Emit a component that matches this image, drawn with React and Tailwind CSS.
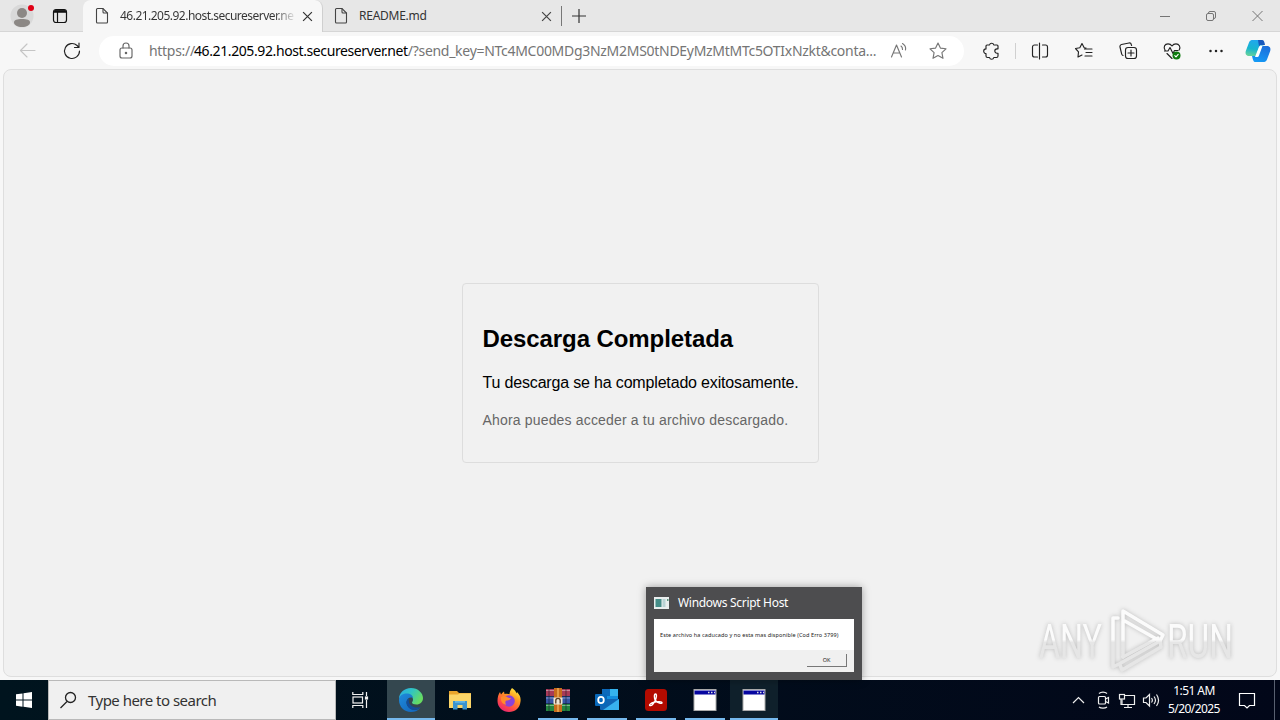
import React from 'react';

const FileIcon = ({ className }) => (
  <svg className={className} width="14" height="18" viewBox="0 0 14 18" fill="none" stroke="#444" strokeWidth="1.1">
    <path d="M2.5 1.5h5.5l4.5 4.5v9a1 1 0 0 1-1 1h-9a1 1 0 0 1-1-1v-12.5a1 1 0 0 1 1-1z" />
    <path d="M8 1.5v3.5a1 1 0 0 0 1 1h3.5" />
  </svg>
);

const CloseIcon = ({ className, size, color }) => (
  <svg className={className} width={size} height={size} viewBox="0 0 10 10" fill="none" stroke={color} strokeWidth="1.1">
    <path d="M1 1l8 8M9 1L1 9" />
  </svg>
);

const ToolIcon = ({ children, className = "", color = "#222" }) => (
  <svg className={"block shrink-0 " + className} width="20" height="20" viewBox="0 0 20 20" fill="none" stroke={color} strokeWidth="1.15" strokeLinejoin="round" strokeLinecap="round">
    {children}
  </svg>
);

function TabBar() {
  return (
    <div className="flex h-8 w-full bg-[#e7e7e7] text-[12px] text-[#333]">
      <div className="flex w-[83px] shrink-0 border-b border-[#d6d6d6]">
        <svg width="28" height="31" viewBox="0 0 28 31" className="ml-2">
          <circle cx="14" cy="16" r="11.5" fill="#d9d9d9" />
          <circle cx="14" cy="13" r="5" fill="#8c8885" />
          <path d="M6 22.5c0-2.600 3-3.500 8-3.500s8 .9 8 3.500c0 2.500-3.500 4.500-8 4.500s-8-2-8-4.500z" fill="#8c8885" />
          <circle cx="23" cy="8" r="3" fill="#e00016" />
        </svg>
        <svg width="16" height="16" viewBox="0 0 16 16" className="mt-2 ml-4" fill="none" stroke="#111">
          <rect x="1.500" y="1.500" width="13" height="13" rx="2.500" strokeWidth="1.200" />
          <path d="M2 4.200a2 2 0 0 1 2-2h8a2 2 0 0 1 2 2z" fill="#111" />
          <path d="M5.500 4v10" strokeWidth="1.200" />
        </svg>
      </div>
      <div className="flex w-[240px] shrink-0 rounded-t-lg border-r border-[#cfcfcf] bg-[#f7f7f7]">
        <FileIcon className="mt-[7px] ml-3" />
        <div className="ml-[11px] w-[174px] bg-gradient-to-r from-[#333] from-88% to-[#e0e0e0] bg-clip-text leading-8 tracking-[-0.520px] whitespace-nowrap text-transparent">46.21.205.92.host.secureserver.ne</div>
        <CloseIcon className="mt-[11px] ml-[8px]" size="11" color="#333" />
      </div>
      <div className="flex w-[239px] shrink-0 border-b border-[#d6d6d6]">
        <FileIcon className="mt-[7px] ml-[11px]" />
        <div className="ml-[11px] w-[182px] leading-8 tracking-[-0.25px]">README.md</div>
        <CloseIcon className="mt-[11px]" size="11" color="#444" />
        <div className="mt-[6px] ml-[9px] h-5 w-px bg-[#777]" />
      </div>
      <div className="flex flex-1 border-b border-[#d6d6d6]">
        <svg width="14" height="14" viewBox="0 0 14 14" className="mt-[9px] ml-[10px]" stroke="#333" strokeWidth="1.200">
          <path d="M7 0v14M0 7h14" />
        </svg>
        <svg width="110" height="14" viewBox="0 0 110 14" className="mt-[9px] mr-3.5 ml-auto" fill="none" stroke="#757575" strokeWidth="1">
          <path d="M4 7.500h10" />
          <rect x="50.500" y="4.500" width="7" height="7" rx="1.500" />
          <path d="M52.500 4.500v-.5a1.500 1.500 0 0 1 1.500-1.500h4a1.500 1.500 0 0 1 1.500 1.500v4a1.500 1.500 0 0 1-1.500 1.500h-.5" />
          <path d="M96.500 2l10 10M106.500 2l-10 10" />
        </svg>
      </div>
    </div>
  );
}

function AddressBar() {
  return (
    <div className="flex h-[37px] w-full items-center bg-[#f7f7f7]">
      <ToolIcon className="ml-[18px]" color="#c5c5c5"><path d="M3 9.500h14M9 3L2.500 9.500l6.500 6.500" /></ToolIcon>
      <ToolIcon className="ml-[24px]"><path d="M17.500 10a7.500 7.500 0 1 1-2.400-5.500l1.900 2M17 2v4.500h-4.500" /></ToolIcon>
      <div className="ml-[17px] flex h-[30px] w-[865px] shrink-0 items-center rounded-full bg-white text-[14px] text-[#757575]">
        <ToolIcon className="ml-[17px]" color="#666">
          <rect x="4" y="7" width="12" height="10" rx="2" />
          <path d="M7 7V5a3 3 0 0 1 6 0v2" />
          <circle cx="10" cy="12" r=".7" fill="#666" />
        </ToolIcon>
        <div className="ml-[13px] flex w-[726px] whitespace-nowrap">
          <span className="w-[45px] tracking-[-0.300px]">https://</span>
          <span className="w-[214px] tracking-[-0.4px] text-black">46.21.205.92.host.secureserver.net</span>
          <span className="tracking-[-0.290px]">/?send_key=NTc4MC00MDg3NzM2MS0tNDEyMzMtMTc5OTIxNzkt&amp;conta...</span>
        </div>
        <ToolIcon className="ml-[14px]" color="#777">
          <path d="M2.500 16L7.500 4l5 12M4.200 12h6.600M12 5c1.300 1 1.600 2.300 1.500 3.500M13.500 2.500c2.500 1.500 3.500 4 3 6.500" />
        </ToolIcon>
        <ToolIcon className="ml-[19px]" color="#777">
          <path d="M10 2l2.400 5.100 5.600.7-4.100 3.900 1.100 5.600-5-2.800-5 2.800 1.100-5.600L2 7.800l5.600-.7z" />
        </ToolIcon>
      </div>
      <ToolIcon className="ml-[17px]">
        <path d="M6 4h2.500a2.200 2.200 0 0 1 4.300 0H16a1 1 0 0 1 1 1v2.800h-1a2.200 2.200 0 0 0 0 4.400h1V15a1.500 1.500 0 0 1-1.500 1.500h-2.700a2.200 2.200 0 0 1-4.300 0H6.500A1.500 1.500 0 0 1 5 15v-2.500a2.300 2.300 0 0 1 0-4.600V5a1 1 0 0 1 1-1z" />
      </ToolIcon>
      <div className="ml-[14px] h-4 w-px bg-[#d0d0d0]" />
      <ToolIcon className="ml-[14px]"><path d="M7.500 4H4.500a2 2 0 0 0-2 2v8a2 2 0 0 0 2 2h3M12.500 4h3a2 2 0 0 1 2 2v8a2 2 0 0 1-2 2h-3M9.500 2v16" /></ToolIcon>
      <ToolIcon className="ml-[24px]"><path d="M12 7l-1.800-.3L8 2.500 5.800 6.700 1.500 7.500l3 3.300L4 16l4-2M10.500 8H18M12 11.500h6M11 15h7M8 2.500L10.200 6.700" /></ToolIcon>
      <ToolIcon className="ml-[24px]">
        <rect x="7.500" y="6.500" width="11" height="11" rx="2.500" />
        <path d="M13 9v6M10 12h6M5 14.500a2 2 0 0 1-1.300-1.300L2 6a2 2 0 0 1 1.500-2.500L11 2a2 2 0 0 1 2.300 1.500l.3 1" />
      </ToolIcon>
      <ToolIcon className="ml-[24px]">
        <path d="M3.200 9.500C.8 6 3 2.800 6 2.800c2 0 3.200 1 4 2.200.8-1.200 2-2.200 4-2.200 3 0 5 3 3.200 6.200M2.500 10H6l2-3.500 3 6 1.500-3H16M5 12.500l5 5" />
        <circle cx="14.500" cy="14.500" r="4" fill="#0f7b0f" stroke="none" />
        <path d="M12.800 14.700l1.200 1.100 2.200-2.400" stroke="#fff" />
      </ToolIcon>
      <ToolIcon className="ml-[24px]"><path d="M4.500 10h.01M10 10h.01M15.500 10h.01" strokeWidth="2.500" /></ToolIcon>
      <svg width="26" height="26" viewBox="0 0 26 26" className="ml-[19px] shrink-0">
        <defs>
          <linearGradient id="copA" x1="0.500" y1="0" x2="0.300" y2="1"><stop offset="0" stopColor="#20a7ee" /><stop offset=".55" stopColor="#17b5cf" /><stop offset="1" stopColor="#67d29a" /></linearGradient>
          <linearGradient id="copB" x1="0.700" y1="0" x2="0.300" y2="1"><stop offset="0" stopColor="#1b6edb" /><stop offset="1" stopColor="#149af5" /></linearGradient>
        </defs>
        <path d="M8 2h9l1.500 5.500H15L11 18H4c-3 0-4-2.500-3.200-5L4 4.500C4.800 2.500 6 2 8 2z" fill="url(#copA)" />
        <path d="M13 2h4c2 0 2.500 2 3 5h-4c-1.200 0-1.700.7-2 1.500z" fill="#1759bd" />
        <path d="M16.500 8H22c3 0 4 2.500 3.200 5L22 21.500c-.8 2-2 2.500-4 2.500H10c-1.500 0-2-2-3-6h3c1.500 0 2.200-.5 2.700-2l2.300-7z" fill="url(#copB)" />
        <path d="M15.500 8h2l-3.500 9.500c-.4 1-1 1.500-2 1.500h-2l3.500-9c.4-1.200 1-2 2-2z" fill="#fff" />
      </svg>
    </div>
  );
}

function DownloadCard() {
  return (
    <div className="h-[180px] w-[357px] rounded border border-[#ddd] px-5 font-[Liberation_Sans,Arial,sans-serif]">
      <h2 className="mt-[41px] text-[24px] leading-[28px] font-bold tracking-[-0.080px] whitespace-nowrap text-black">Descarga Completada</h2>
      <p className="mt-[21px] text-[16px] leading-[18px] tracking-[-0.170px] whitespace-nowrap text-black">Tu descarga se ha completado exitosamente.</p>
      <p className="mt-[20px] text-[14px] leading-4 tracking-[0.170px] whitespace-nowrap text-[#666]">Ahora puedes acceder a tu archivo descargado.</p>
    </div>
  );
}

function Watermark() {
  return (
    <svg className="absolute top-[605px] left-[1036px] drop-shadow-[0_0_2px_#bbb]" width="240" height="72" viewBox="0 0 240 72" fill="none">
      <defs>
        <linearGradient id="wm" x1="0" y1="0" x2="0" y2="72" gradientUnits="userSpaceOnUse">
          <stop offset=".48" stopColor="#fbfbfb" /><stop offset=".52" stopColor="#e6e6e6" />
        </linearGradient>
      </defs>
      <g fill="url(#wm)" className="font-[Roboto,sans-serif] text-[49px]">
        <text x="3" y="53" textLength="63" lengthAdjust="spacingAndGlyphs">ANY</text>
        <text x="131" y="53" textLength="66" lengthAdjust="spacingAndGlyphs">RUN</text>
      </g>
      <g stroke="url(#wm)" strokeWidth="3.5" strokeLinejoin="round" strokeLinecap="round">
        <path d="M82 13h-5v49l6-3 41-23" />
        <path d="M87 52V6l40 24-3 6L87 15" />
        <path d="M87 52l35-19M84 60l2 5 39-23-1-6" />
      </g>
    </svg>
  );
}

function TaskPreview() {
  return (
    <div className="absolute top-[587px] left-[646px] h-[93px] w-[216px] bg-[#4d4d4f] px-2 shadow-[0_0_8px_rgba(0,0,0,0.35)]">
      <div className="flex h-8 items-center text-[12px] text-white">
        <svg width="16" height="12" viewBox="0 0 16 12">
          <rect width="15" height="12" fill="#e9eeee" />
          <rect x="1.500" y="2" width="6" height="8" fill="#458d88" />
          <rect x="8.500" y="2" width="3" height="8" fill="#b9d3d4" />
          <rect x="13" y="2" width="1.500" height="2" fill="#57937a" />
        </svg>
        <span className="ml-2 tracking-[-0.3px] whitespace-nowrap">Windows Script Host</span>
      </div>
      <div className="flex h-[53px] w-[200px] flex-col bg-white text-[5.500px] text-[#222]">
        <div className="h-[31px] pl-[6px] leading-[32px] tracking-[0.105px] whitespace-nowrap">Este archivo ha caducado y no esta mas disponible (Cod Erro 3799)</div>
        <div className="flex flex-1 justify-end bg-[#f0f0f0] pt-1 pr-[7px]">
          <div className="h-[13px] w-[40px] border-r border-b border-[#777] text-center leading-[13px]">OK</div>
        </div>
      </div>
    </div>
  );
}

const WindowIcon = () => (
  <svg width="24" height="24" viewBox="0 0 24 24">
    <rect x="1" y="1.500" width="22" height="21" fill="#fff" stroke="#aaa" />
    <rect x="1.500" y="2.500" width="21" height="4" fill="#0606a0" />
    <path d="M15 4.500h1.500M18 4.500h1.500M21 4.500h1" stroke="#ddd" strokeWidth="1.500" />
  </svg>
);

const EdgeIcon = () => (
  <svg width="24" height="24" viewBox="0 0 24 24">
    <defs>
      <linearGradient id="edA" x1="0" y1="0" x2="1" y2=".5"><stop offset="0" stopColor="#29a8e8" /><stop offset=".5" stopColor="#30c4c4" /><stop offset="1" stopColor="#67dc61" /></linearGradient>
      <linearGradient id="edB" x1="0" y1="0" x2="1" y2="1"><stop offset="0" stopColor="#1f8bdc" /><stop offset="1" stopColor="#1262b8" /></linearGradient>
    </defs>
    <path d="M0 11C0 5 5 0 12 0s12 5 12 10c0 4-3 6.500-6.500 6.500-3 0-4.500-1-4.500-2 0-.8 1-1.200 1-2.800 0-3-3-5.200-6.500-5.200C3.500 6.500 1 8.500 0 11z" fill="url(#edA)" />
    <path d="M0 12c0-4 3.500-6.500 7.500-6.500 4 0 6.500 2 6.500 4.500-3-1.500-6.500.5-6.500 4.500 0 4.500 4.500 7.500 8.500 7.500 2.500 0 4.500-1.500 5.500-2.500C19.500 22.500 16 24 12 24 5 24 0 18.500 0 12z" fill="url(#edB)" />
    <path d="M10 10.500c-2 1-2.800 2.800-2.500 4.500.6 4.500 5 7.500 9 6.800 2-.3 3.800-1.300 5-2.800-5 1.500-10-.5-11.300-4-.5-1.500-.6-3-.2-4.500z" fill="#124d9b" />
  </svg>
);

const FolderIcon = () => (
  <svg width="24" height="24" viewBox="0 0 24 24">
    <path d="M1 3h8l2 2h12v15H1z" fill="#e9a52c" />
    <path d="M1 6.500h9l1.500-1H23V20H1z" fill="#fbd568" />
    <path d="M5 13h14v8.500h-4.500V17h-5v4.500H5z" fill="#3b93cf" />
    <path d="M7 13h10v1.800H7z" fill="#62b5e5" />
  </svg>
);

const FirefoxIcon = () => (
  <svg width="24" height="24" viewBox="0 0 24 24">
    <defs>
      <linearGradient id="ff" x1=".8" y1="0" x2=".2" y2="1"><stop offset="0" stopColor="#fff044" /><stop offset=".35" stopColor="#ff9a20" /><stop offset=".7" stopColor="#ff4b45" /><stop offset="1" stopColor="#e41f79" /></linearGradient>
    </defs>
    <path d="M15 0c3 2 4 3.800 4.500 5.500L20 4c3 3 4 6 3.500 9.500C23 20 18 24 12 24S.5 19.500.5 13C.5 9 1.500 6 3 4l1 2.500C5 5 6 4 7 3.500L7.500 6c2.500-.6 4-.2 5 .3C12.500 4 13.500 2 15 0z" fill="url(#ff)" />
    <circle cx="12" cy="13" r="5.800" fill="#8a42d8" />
    <path d="M4 9c3-2 5-.5 7 .5 1 .5 1.500.5 3 .7-1 2-3 1.800-4.500 2.300-1.500.7-1.500 3-.2 4.200-4-.5-6-4-5.300-7.700z" fill="#ff8b2c" />
  </svg>
);

const RarIcon = () => (
  <svg width="24" height="24" viewBox="0 0 24 24">
    <rect y="1" width="24" height="7" fill="#a83a58" />
    <rect y="8.500" width="24" height="7" fill="#3656a6" />
    <rect y="16" width="24" height="7" fill="#23863f" />
    <path d="M0 2.500h24M0 10h24M0 17.500h24" stroke="#ffffff66" />
    <path d="M3 1v22M20 1v22" stroke="#1c1c2c66" strokeWidth="1.500" />
    <rect x="8" y="0" width="8" height="24" fill="#c66b1c" />
    <path d="M12 0v24" stroke="#e39a45" strokeWidth="2" />
    <rect x="7.500" y="9.500" width="9" height="7" rx="1" fill="#eee6d3" />
    <path d="M9.800 15.500v-3a2.200 2.200 0 0 1 4.400 0v3" fill="none" stroke="#553a22" strokeWidth="1.300" />
  </svg>
);

const OutlookIcon = () => (
  <svg width="26" height="24" viewBox="0 0 26 24">
    <rect x="8" y="1" width="16" height="14" rx="1" fill="#1490df" />
    <rect x="8" y="1" width="8" height="7" fill="#0c6abb" />
    <rect x="16" y="1" width="8" height="7" fill="#35b4ee" />
    <path d="M6 11h19v10a1 1 0 0 1-1 1H7a1 1 0 0 1-1-1z" fill="#1066b5" />
    <path d="M25 11v11H9z" fill="#38b2ef" />
    <rect x="1" y="6" width="12" height="12" rx="1" fill="#0868b9" />
    <ellipse cx="7" cy="12" rx="2.800" ry="3.200" fill="none" stroke="#fff" strokeWidth="1.800" />
  </svg>
);

const AcrobatIcon = () => (
  <svg width="22" height="22" viewBox="0 0 22 22">
    <rect width="22" height="22" rx="3.500" fill="#b30b00" />
    <path d="M5 16.500c-1.500-.5 1-2.500 4-3.300 3-.8 8-1 8 .5s-4.500.3-6.500-2.200C9 9.500 9 5 10.500 5s1.200 4-.8 7.500C8 15.500 6 17 5 16.500z" fill="none" stroke="#fff" strokeWidth="1.400" />
  </svg>
);

const apps = [
  { Icon: EdgeIcon, box: "bg-[#34474f]", line: "w-12" },
  { Icon: FolderIcon, box: "", line: "w-0" },
  { Icon: FirefoxIcon, box: "", line: "w-0" },
  { Icon: RarIcon, box: "", line: "w-10" },
  { Icon: OutlookIcon, box: "", line: "w-10" },
  { Icon: AcrobatIcon, box: "", line: "w-10" },
  { Icon: WindowIcon, box: "", line: "w-10" },
  { Icon: WindowIcon, box: "bg-[#0f202b]", line: "w-12" },
];

function Taskbar() {
  return (
    <div className="flex h-10 w-full bg-gradient-to-r from-[#00141e] to-[#020719]">
      <div className="flex w-12 items-center justify-center">
        <svg width="16" height="16" viewBox="0 0 16 16" fill="#fff"><path d="M0 2.300L6.500 1.400v6.200H0zM7.500 1.200L16 0v7.600H7.500zM0 8.500h6.500v6.200L0 13.800zM7.500 8.500H16V16l-8.500-1.200z" /></svg>
      </div>
      <div className="flex w-72 items-center border border-[#b9b9b9] bg-[#f0f0f0] text-[15px] text-[#333]">
        <svg width="18" height="18" viewBox="0 0 18 18" className="ml-[10px]" fill="none" stroke="#222" strokeWidth="1.300">
          <circle cx="11.500" cy="6.500" r="5" /><path d="M8 10.500L1.500 17" />
        </svg>
        <span className="ml-[11px] tracking-[-0.52px]">Type here to search</span>
      </div>
      <div className="flex w-[51px] items-center pl-4">
        <svg width="17" height="16" viewBox="0 0 17 16" fill="none" stroke="#f2f2f2" strokeWidth="1.200">
          <path d="M.8 0v2.500h10V0M.8 16v-2.500h10V16M14.500 0v4M14.500 8v8" /><rect x="1" y="5" width="9.500" height="6" /><rect x="13.500" y="5" width="2" height="2" fill="#fff" />
        </svg>
      </div>
      <div className="flex gap-px">
        {apps.map(({ Icon, box, line }, i) => (
          <div key={i} className={"flex w-12 flex-col items-center " + box}>
            <div className="flex h-[38px] items-center pt-[2px]"><Icon /></div>
            <div className={"h-0.5 bg-[#76b9ed] " + line} />
          </div>
        ))}
      </div>
      <div className="ml-auto flex items-center text-white">
        <svg width="90" height="20" viewBox="0 0 90 20" fill="none" stroke="#eee" strokeWidth="1.200">
          <path d="M2 13l5.500-5.500L13 13" />
          <rect x="27.500" y="6.500" width="7" height="7.500" rx="1" />
          <path d="M34.500 9l3-1.500v5.500l-3-1.500M28 3.500c2-1.800 6-1.800 8 0M28 17c2 1.500 6 1.500 8 0" />
          <path d="M54 5.500h9.500v9H51v-5M57 14.500V17M53 17.500h8" /><rect x="48.500" y="4.500" width="5" height="4.500" /><path d="M50 9v5.500h2" />
          <path d="M72.500 8v4.500h2.500l3.500 3.500V4.500L75 8zM80.500 8c1 1.300 1 3.200 0 4.500M83 6.500c1.800 2.300 1.800 5.200 0 7.500M85.500 4.500c2.500 3.500 2.500 8 0 11.500" />
        </svg>
        <div className="ml-[3px] w-[60px] text-center text-[12px] leading-[18px] tracking-[-0.570px] whitespace-nowrap">
          <div>1:51 AM</div>
          <div>5/20/2025</div>
        </div>
        <svg width="18" height="18" viewBox="0 0 18 18" className="ml-3.5" fill="none" stroke="#fff" strokeWidth="1.200">
          <path d="M1.500 2.500h15v12h-5L9 17l-2.500-2.500h-5z" />
        </svg>
        <div className="ml-[18px] h-10 w-[6px] border-l border-[#596070]" />
      </div>
    </div>
  );
}

export default function App() {
  return (
    <div className="relative flex h-[720px] w-[1280px] flex-col overflow-hidden bg-[#f7f7f7] font-[Noto_Sans,sans-serif]">
      <TabBar />
      <AddressBar />
      <div className="mx-[3px] mb-[3px] flex flex-1 items-center justify-center rounded-lg border border-[#dedede] bg-[#f1f1f1]">
        <DownloadCard />
      </div>
      <Taskbar />
      <Watermark />
      <TaskPreview />
    </div>
  );
}
